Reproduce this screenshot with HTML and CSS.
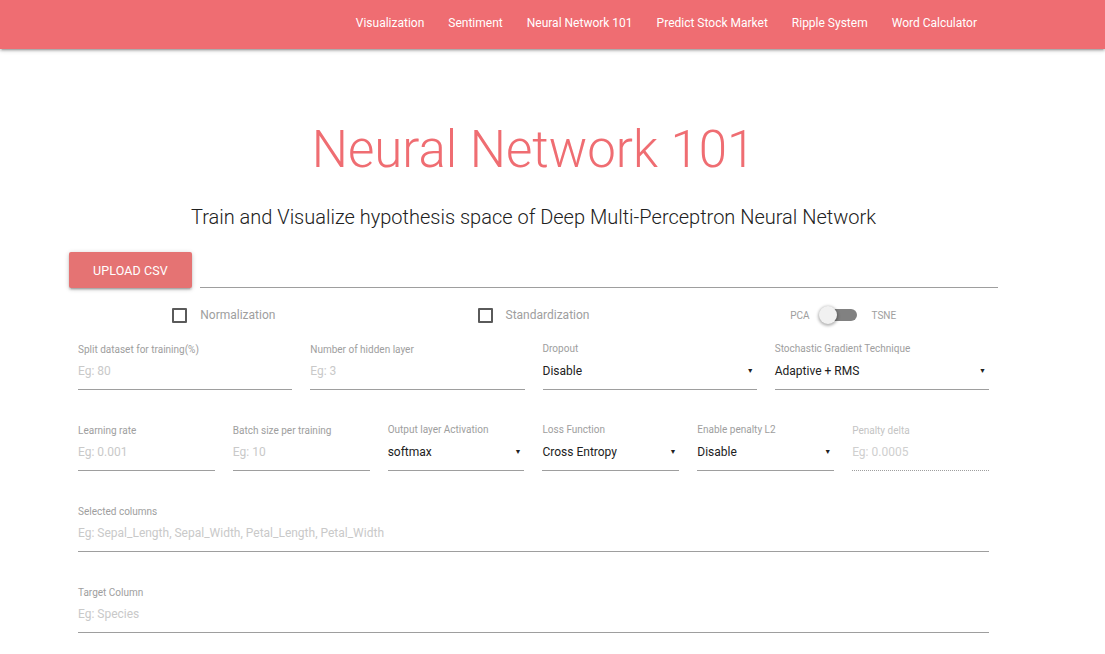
FILE: index.html
```html
<!DOCTYPE html>
<html>
<head>
<meta charset="utf-8">
<title>Neural Network 101</title>
<link rel="stylesheet" href="styles.css">
</head>
<body>
<nav class="navbar">
  <ul class="nav-links">
    <li><a href="#">Visualization</a></li>
    <li><a href="#">Sentiment</a></li>
    <li><a href="#">Neural Network 101</a></li>
    <li><a href="#">Predict Stock Market</a></li>
    <li><a href="#">Ripple System</a></li>
    <li><a href="#">Word Calculator</a></li>
  </ul>
</nav>
<main class="container">
  <h1 class="title">Neural Network 101</h1>
  <p class="subtitle">Train and Visualize hypothesis space of Deep Multi-Perceptron Neural Network</p>

  <div class="upload-row">
    <button class="btn">UPLOAD CSV</button>
    <div class="file-path"></div>
  </div>

  <div class="option-row">
    <div class="option-cell">
      <label class="checkbox"><span class="box"></span><span class="check-label">Normalization</span></label>
    </div>
    <div class="option-cell">
      <label class="checkbox"><span class="box"></span><span class="check-label">Standardization</span></label>
    </div>
    <div class="option-cell">
      <div class="switch">
        <span class="switch-label">PCA</span>
        <span class="lever"><span class="knob"></span></span>
        <span class="switch-label">TSNE</span>
      </div>
    </div>
  </div>

  <div class="row cols-4">
    <div class="field">
      <div class="field-label">Split dataset for training(%)</div>
      <div class="field-input placeholder">Eg: 80</div>
    </div>
    <div class="field">
      <div class="field-label">Number of hidden layer</div>
      <div class="field-input placeholder">Eg: 3</div>
    </div>
    <div class="field select-field">
      <div class="field-label">Dropout</div>
      <div class="field-input select"><span>Disable</span><span class="caret">▼</span></div>
    </div>
    <div class="field select-field">
      <div class="field-label">Stochastic Gradient Technique</div>
      <div class="field-input select"><span>Adaptive + RMS</span><span class="caret">▼</span></div>
    </div>
  </div>

  <div class="row cols-6">
    <div class="field">
      <div class="field-label">Learning rate</div>
      <div class="field-input placeholder">Eg: 0.001</div>
    </div>
    <div class="field">
      <div class="field-label">Batch size per training</div>
      <div class="field-input placeholder">Eg: 10</div>
    </div>
    <div class="field select-field">
      <div class="field-label">Output layer Activation</div>
      <div class="field-input select"><span>softmax</span><span class="caret">▼</span></div>
    </div>
    <div class="field select-field">
      <div class="field-label">Loss Function</div>
      <div class="field-input select"><span>Cross Entropy</span><span class="caret">▼</span></div>
    </div>
    <div class="field select-field">
      <div class="field-label">Enable penalty L2</div>
      <div class="field-input select"><span>Disable</span><span class="caret">▼</span></div>
    </div>
    <div class="field disabled">
      <div class="field-label">Penalty delta</div>
      <div class="field-input placeholder">Eg: 0.0005</div>
    </div>
  </div>

  <div class="row cols-1">
    <div class="field">
      <div class="field-label">Selected columns</div>
      <div class="field-input placeholder">Eg: Sepal_Length, Sepal_Width, Petal_Length, Petal_Width</div>
    </div>
  </div>

  <div class="row cols-1">
    <div class="field">
      <div class="field-label">Target Column</div>
      <div class="field-input placeholder">Eg: Species</div>
    </div>
  </div>
</main>
</body>
</html>
```

FILE: styles.css
```css
* { box-sizing: border-box; }

html, body {
  margin: 0;
  padding: 0;
  background: #ffffff;
  font-family: Roboto, "Noto Sans", Arial, sans-serif;
  color: #212121;
}

.navbar {
  height: 49px;
  background: #ef6d72;
  box-shadow: 0 2px 2px 0 rgba(0,0,0,0.14), 0 3px 1px -2px rgba(0,0,0,0.12), 0 1px 5px 0 rgba(0,0,0,0.2);
  display: flex;
  justify-content: flex-end;
}

.nav-links {
  list-style: none;
  margin: 0;
  padding: 1px 116px 0 0;
  display: flex;
}

.nav-links a {
  display: block;
  padding: 0 12px;
  line-height: 45px;
  color: #ffffff;
  text-decoration: none;
  font-size: 12px;
}

.container {
  width: 929px;
  margin-left: 69px;
}

.title {
  margin: 71px 0 0;
  text-align: center;
  font-size: 51px;
  line-height: 60px;
  font-weight: 300;
  color: #ef6d72;
}

.subtitle {
  margin: 25px 0 0;
  text-align: center;
  font-size: 20px;
  line-height: 24px;
  font-weight: 300;
  color: #212121;
}

.upload-row {
  display: flex;
  align-items: flex-end;
  margin-top: 23px;
}

.btn {
  height: 36px;
  padding: 0 24px;
  border: none;
  border-radius: 2px;
  background: #e57373;
  color: #ffffff;
  font-family: Roboto, Arial, sans-serif;
  font-size: 12.5px;
  letter-spacing: 0.1px;
  box-shadow: 0 2px 2px 0 rgba(0,0,0,0.14), 0 3px 1px -2px rgba(0,0,0,0.12), 0 1px 5px 0 rgba(0,0,0,0.2);
}

.file-path {
  flex: 1;
  margin-left: 8px;
  height: 36px;
  border-bottom: 1px solid #9e9e9e;
}

.option-row {
  display: grid;
  grid-template-columns: repeat(3, 1fr);
  height: 28px;
  margin-top: 13px;
}

.option-cell {
  display: flex;
  align-items: center;
  justify-content: center;
}

.checkbox {
  display: flex;
  align-items: center;
}

.box {
  width: 15px;
  height: 15px;
  border: 2px solid #5a5a5a;
  border-radius: 1px;
  margin-right: 13px;
}

.check-label {
  font-size: 12px;
  color: #9e9e9e;
}

.switch {
  display: flex;
  align-items: center;
}

.switch-label {
  font-size: 10px;
  color: #9e9e9e;
}

.lever {
  position: relative;
  width: 36px;
  height: 12px;
  margin: 0 15px 0 11px;
  border-radius: 7px;
  background: #818181;
}

.knob {
  position: absolute;
  left: -2px;
  top: -3px;
  width: 18px;
  height: 18px;
  border-radius: 50%;
  background: #f1f1f1;
  box-shadow: 0 1px 3px 1px rgba(0,0,0,0.3);
}

.row {
  display: grid;
  margin-top: 14px;
}

.row + .row { margin-top: 34px; }

.cols-4 { grid-template-columns: repeat(4, 1fr); }
.cols-6 { grid-template-columns: repeat(6, 1fr); }
.cols-1 { grid-template-columns: 1fr; }

.field {
  padding: 0 9px;
}

.field-label {
  font-size: 10px;
  line-height: 14px;
  color: #9e9e9e;
}

.select-field .field-label {
  line-height: 12px;
  margin-bottom: 2px;
}

.field-input {
  height: 33px;
  padding-top: 4px;
  font-size: 12px;
  line-height: 20px;
  border-bottom: 1px solid #9e9e9e;
}

.placeholder { color: #c9c9c9; }

.select {
  display: flex;
  justify-content: space-between;
  color: #212121;
}

.caret {
  font-size: 7px;
  padding-right: 3px;
  color: #212121;
}

.disabled .field-label { color: #c4c4c4; }
.disabled .field-input { border-bottom: 1px dotted #9e9e9e; color: #cfcfcf; }
```
